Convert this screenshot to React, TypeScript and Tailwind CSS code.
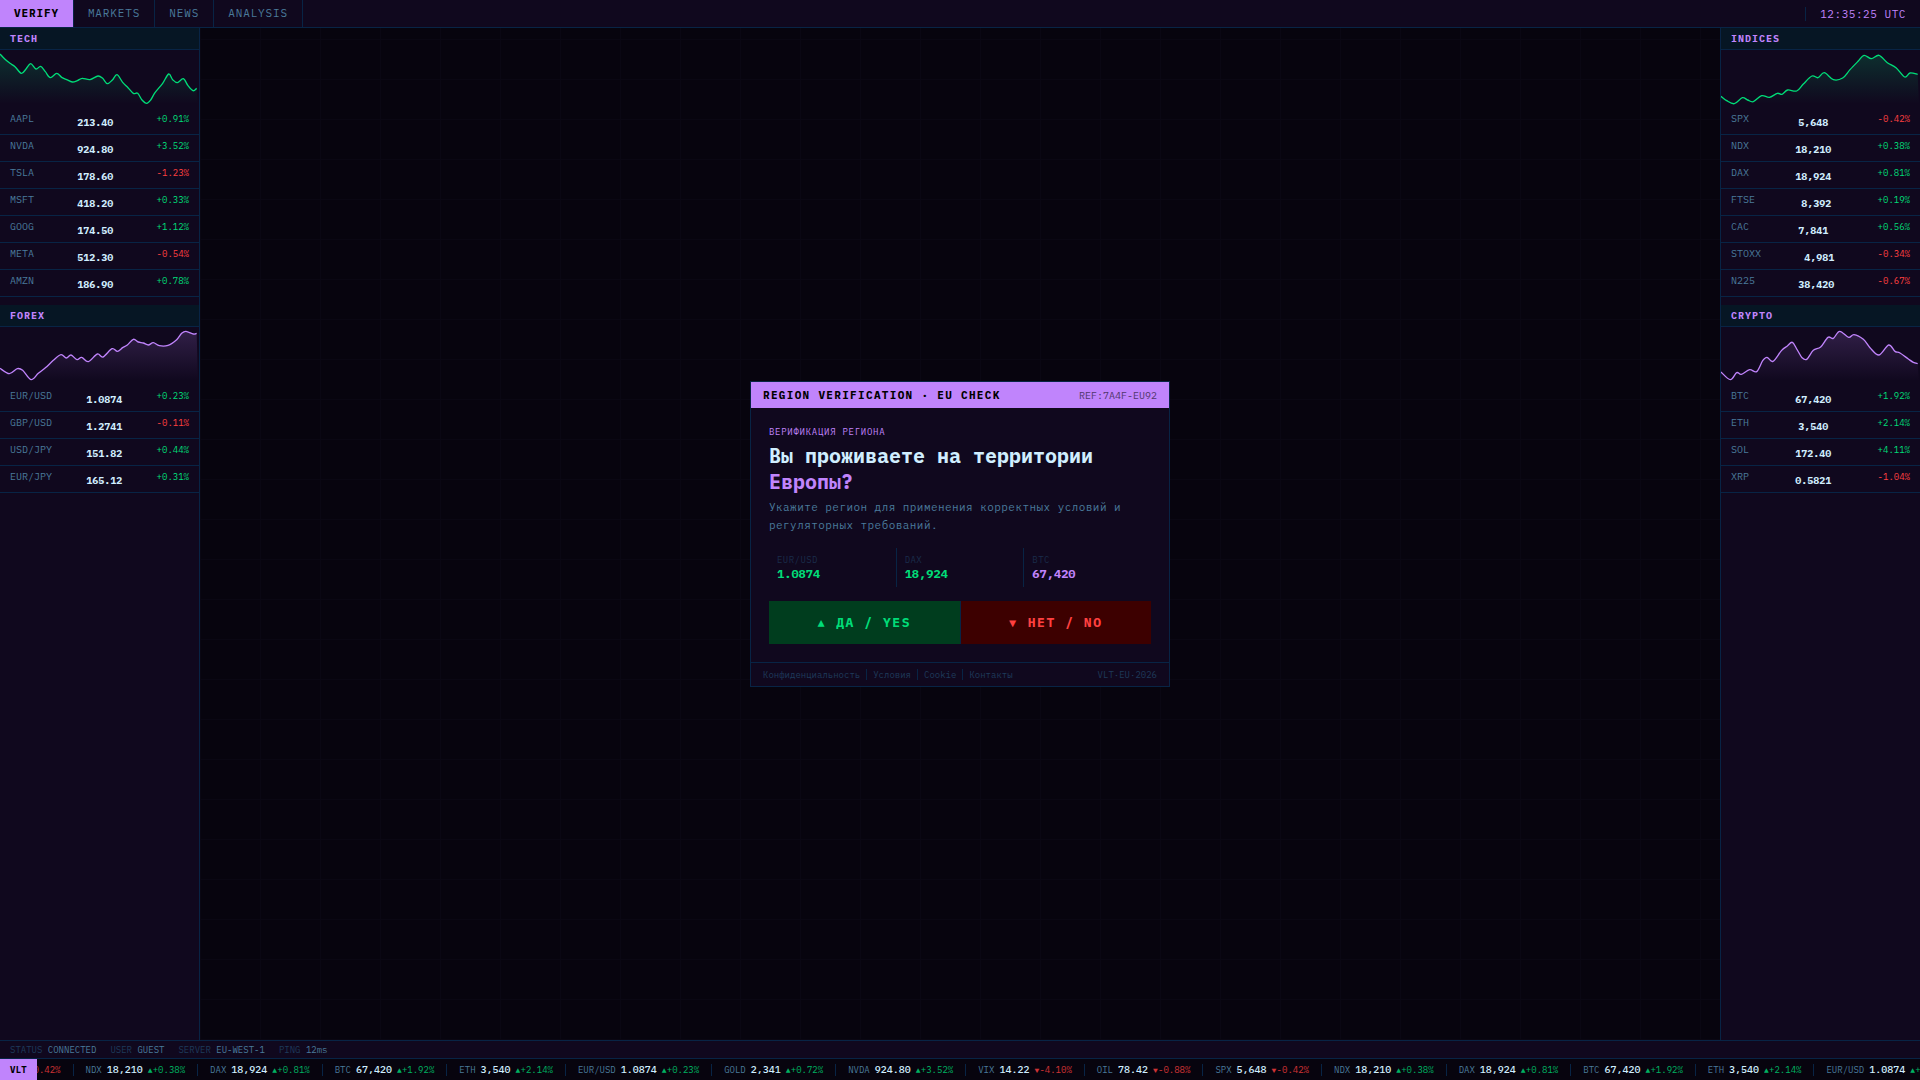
import { useState } from 'react';

interface Quote {
  symbol: string;
  price: string;
  change: string;
}

interface Panel {
  title: string;
  tone: 'green' | 'purple';
  points: number[][];
  quotes: Quote[];
}

const TABS = ['VERIFY', 'MARKETS', 'NEWS', 'ANALYSIS'];

const LEFT_PANELS: Panel[] = [
  {
    title: 'TECH',
    tone: 'green',
    points: [[0, 12], [15, 28], [30, 40], [45, 50], [64, 70], [78, 57], [92, 41], [108, 57], [122, 49], [136, 65], [151, 83], [170, 70], [185, 82], [200, 89], [217, 96], [232, 92], [247, 85], [270, 89], [294, 78], [308, 85], [322, 101], [337, 90], [351, 74], [368, 97], [384, 113], [400, 130], [413, 130], [426, 150], [440, 160], [452, 150], [465, 128], [488, 100], [506, 72], [518, 89], [532, 98], [550, 86], [564, 107], [579, 122], [590, 115]],
    quotes: [
      { symbol: 'AAPL', price: '213.40', change: '+0.91%' },
      { symbol: 'NVDA', price: '924.80', change: '+3.52%' },
      { symbol: 'TSLA', price: '178.60', change: '-1.23%' },
      { symbol: 'MSFT', price: '418.20', change: '+0.33%' },
      { symbol: 'GOOG', price: '174.50', change: '+1.12%' },
      { symbol: 'META', price: '512.30', change: '-0.54%' },
      { symbol: 'AMZN', price: '186.90', change: '+0.78%' },
    ],
  },
  {
    title: 'FOREX',
    tone: 'purple',
    points: [[0, 124], [28, 140], [52, 125], [68, 130], [93, 158], [115, 139], [138, 121], [160, 100], [183, 83], [199, 93], [213, 84], [231, 98], [245, 91], [265, 104], [292, 81], [309, 90], [336, 65], [352, 73], [368, 62], [382, 54], [400, 37], [415, 45], [430, 48], [445, 54], [460, 47], [478, 56], [504, 55], [530, 38], [545, 19], [558, 13], [580, 21], [590, 19]],
    quotes: [
      { symbol: 'EUR/USD', price: '1.0874', change: '+0.23%' },
      { symbol: 'GBP/USD', price: '1.2741', change: '-0.11%' },
      { symbol: 'USD/JPY', price: '151.82', change: '+0.44%' },
      { symbol: 'EUR/JPY', price: '165.12', change: '+0.31%' },
    ],
  },
];

const RIGHT_PANELS: Panel[] = [
  {
    title: 'INDICES',
    tone: 'green',
    points: [[0, 139], [17, 152], [40, 161], [64, 143], [80, 150], [97, 155], [122, 137], [145, 142], [169, 130], [183, 133], [200, 120], [227, 123], [247, 102], [273, 78], [291, 83], [310, 68], [337, 89], [365, 84], [387, 59], [412, 33], [429, 16], [451, 26], [474, 16], [499, 38], [525, 53], [551, 81], [567, 69], [590, 73]],
    quotes: [
      { symbol: 'SPX', price: '5,648', change: '-0.42%' },
      { symbol: 'NDX', price: '18,210', change: '+0.38%' },
      { symbol: 'DAX', price: '18,924', change: '+0.81%' },
      { symbol: 'FTSE', price: '8,392', change: '+0.19%' },
      { symbol: 'CAC', price: '7,841', change: '+0.56%' },
      { symbol: 'STOXX', price: '4,981', change: '-0.34%' },
      { symbol: 'N225', price: '38,420', change: '-0.67%' },
    ],
  },
  {
    title: 'CRYPTO',
    tone: 'purple',
    points: [[0, 135], [28, 158], [47, 137], [61, 142], [86, 128], [107, 134], [125, 101], [138, 91], [156, 103], [182, 70], [199, 57], [214, 46], [229, 69], [243, 92], [257, 97], [277, 70], [299, 60], [321, 31], [337, 34], [356, 13], [383, 31], [399, 23], [427, 37], [447, 62], [474, 84], [503, 54], [522, 73], [537, 78], [562, 96], [577, 106], [590, 110]],
    quotes: [
      { symbol: 'BTC', price: '67,420', change: '+1.92%' },
      { symbol: 'ETH', price: '3,540', change: '+2.14%' },
      { symbol: 'SOL', price: '172.40', change: '+4.11%' },
      { symbol: 'XRP', price: '0.5821', change: '-1.04%' },
    ],
  },
];

const TICKER: Quote[] = [
  { symbol: 'SPX', price: '5,648', change: '-0.42%' },
  { symbol: 'NDX', price: '18,210', change: '+0.38%' },
  { symbol: 'DAX', price: '18,924', change: '+0.81%' },
  { symbol: 'BTC', price: '67,420', change: '+1.92%' },
  { symbol: 'ETH', price: '3,540', change: '+2.14%' },
  { symbol: 'EUR/USD', price: '1.0874', change: '+0.23%' },
  { symbol: 'GOLD', price: '2,341', change: '+0.72%' },
  { symbol: 'NVDA', price: '924.80', change: '+3.52%' },
  { symbol: 'VIX', price: '14.22', change: '-4.10%' },
  { symbol: 'OIL', price: '78.42', change: '-0.88%' },
];

const STATUS = [
  ['STATUS', 'CONNECTED'],
  ['USER', 'GUEST'],
  ['SERVER', 'EU-WEST-1'],
  ['PING', '12ms'],
];

const STATS = [
  { label: 'EUR/USD', value: '1.0874', color: 'text-[#00dc78]' },
  { label: 'DAX', value: '18,924', color: 'text-[#00dc78]' },
  { label: 'BTC', value: '67,420', color: 'text-[#c084fc]' },
];

const LINKS = ['Конфиденциальность', 'Условия', 'Cookie', 'Контакты'];

function changeColor(change: string) {
  return change.startsWith('-') ? 'text-[#ff4040]' : 'text-[#00dc78]';
}

// Catmull-Rom spline through the points
function smoothPath(pts: number[][]) {
  let d = `M${pts[0][0]} ${pts[0][1]}`;
  for (let i = 0; i < pts.length - 1; i++) {
    const p0 = pts[i - 1] ?? pts[i];
    const p1 = pts[i];
    const p2 = pts[i + 1];
    const p3 = pts[i + 2] ?? p2;
    d += ` C${p1[0] + (p2[0] - p0[0]) / 6} ${p1[1] + (p2[1] - p0[1]) / 6} ${p2[0] - (p3[0] - p1[0]) / 6} ${p2[1] - (p3[1] - p1[1]) / 6} ${p2[0]} ${p2[1]}`;
  }
  return d;
}

function Sparkline({ id, points, tone }: { id: string; points: number[][]; tone: Panel['tone'] }) {
  const color = tone === 'green' ? '#00dc78' : '#c084fc';
  const line = smoothPath(points);
  return (
    <svg viewBox="0 0 597 174" preserveAspectRatio="none" className="block w-full h-[58px]" aria-hidden="true">
      <defs>
        <linearGradient id={id} gradientUnits="userSpaceOnUse" x1="0" y1="0" x2="0" y2="162">
          <stop offset="0" stopColor={color} stopOpacity="0.2" />
          <stop offset="1" stopColor={color} stopOpacity="0" />
        </linearGradient>
      </defs>
      <path d={`${line} L594 168 L0 168 Z`} fill={`url(#${id})`} />
      <path d={line} fill="none" stroke={color} strokeWidth="4" />
    </svg>
  );
}

function Sidebar({ panels, className }: { panels: Panel[]; className: string }) {
  return (
    <aside className={`w-[200px] shrink-0 flex flex-col gap-2 bg-[#10081e] border-[#082445] ${className}`}>
      {panels.map(panel => (
        <section key={panel.title}>
          <h2 className="h-[22px] px-2.5 flex items-center bg-[#061624] border-b border-[#082445] text-[10px] font-bold tracking-widest text-[#c084fc]">
            {panel.title}
          </h2>
          <Sparkline id={`fill-${panel.title}`} points={panel.points} tone={panel.tone} />
          <table className="block" aria-label={panel.title}>
            <tbody className="block">
              {panel.quotes.map(q => (
                <tr key={q.symbol} className="h-[27px] px-2.5 py-[5px] flex justify-between border-b border-[#082445] leading-3">
                  <td className="text-[10px] text-[#4a7a9b]">{q.symbol}</td>
                  <td className="self-end text-[10px] font-bold text-[#d0eeff]">{q.price}</td>
                  <td className={`text-[9px] leading-[11px] ${changeColor(q.change)}`}>{q.change}</td>
                </tr>
              ))}
            </tbody>
          </table>
        </section>
      ))}
    </aside>
  );
}

function VerifyCard() {
  return (
    <div className="w-[420px] border border-[#082445] bg-[#10081e]">
      <div className="h-[26px] px-3 flex items-center justify-between bg-[#c084fc] text-black">
        <span className="text-[11px] font-bold tracking-[0.12em]">REGION VERIFICATION · EU CHECK</span>
        <span className="text-[10px] opacity-60">REF:7A4F-EU92</span>
      </div>

      <div className="p-[18px]">
        <p className="mb-[5px] text-[9px] leading-3 tracking-[0.08em] text-[#c084fc]">ВЕРИФИКАЦИЯ РЕГИОНА</p>
        <h1 className="mb-[3px] text-xl leading-[26px] font-bold text-[#d0eeff]">
          Вы проживаете на территории <span className="text-[#c084fc]">Европы?</span>
        </h1>
        <p className="mb-3.5 text-[11px] leading-[18px] tracking-[0.04em] text-[#4a7a9b]">
          Укажите регион для применения корректных условий и регуляторных требований.
        </p>

        <dl className="mb-3.5 grid grid-cols-3 gap-px bg-[#082445]">
          {STATS.map(s => (
            <div key={s.label} className="px-2 py-1.5 bg-[#10081e]">
              <dt className="mb-px text-[9px] leading-[11px] tracking-wider text-[#1a2c4a]">{s.label}</dt>
              <dd className={`text-xs leading-[15px] font-bold ${s.color}`}>{s.value}</dd>
            </div>
          ))}
        </dl>

        <div className="grid grid-cols-2 gap-px bg-[#082445] text-[13px] font-bold tracking-[0.12em]">
          <button className="h-[43px] flex items-center justify-center gap-2.5 bg-[#003d1e] hover:bg-[#004d26] text-[#00dc78]">
            <span className="text-xs">▲</span>ДА / YES
          </button>
          <button className="h-[43px] flex items-center justify-center gap-2.5 bg-[#3d0000] hover:bg-[#4d0000] text-[#ff4040]">
            <span className="text-xs">▼</span>НЕТ / NO
          </button>
        </div>
      </div>

      <div className="h-6 px-3 flex items-center justify-between border-t border-[#082445] text-[9px] leading-[11px] text-[#1e3a5a]">
        <div className="flex">
          {LINKS.map((link, i) => (
            <a
              key={link}
              href="#"
              className={i === 0 ? 'pr-1.5' : 'px-1.5 border-l border-[#082445]'}
            >
              {link}
            </a>
          ))}
        </div>
        <span>VLT·EU·2026</span>
      </div>
    </div>
  );
}

function Ticker() {
  const items = [...TICKER, ...TICKER.slice(0, 6)];
  return (
    <div className="h-[22px] flex border-t border-[#082445] bg-[#07040e]">
      <div className="px-2.5 shrink-0 flex items-center bg-[#c084fc] text-[9px] font-bold tracking-wide text-black">VLT</div>
      <div className="flex-1 min-w-0 flex items-center overflow-hidden">
        <div className="-ml-[82px] flex">
          {items.map((q, i) => (
            <div key={i} className="h-3 px-3 shrink-0 flex items-center gap-[5px] border-r border-[#082445] text-[9px]">
              <span className="text-[#4a7a9b]">{q.symbol}</span>
              <span className="text-[10px] font-medium text-[#d0eeff]">{q.price}</span>
              <span className={`flex items-center opacity-80 ${changeColor(q.change)}`}>
                <span className="w-[5px] text-[8px]">{q.change.startsWith('-') ? '▼' : '▲'}</span>
                {q.change}
              </span>
            </div>
          ))}
        </div>
      </div>
    </div>
  );
}

export default function App() {
  const [tab, setTab] = useState('VERIFY');

  return (
    <div className="min-h-screen flex flex-col bg-[#07040e] font-['IBM_Plex_Mono','Liberation_Mono',monospace]">
      <header className="h-7 flex items-center justify-between border-b border-[#082445] bg-[#10081e] text-[11px]">
        <nav className="h-full flex">
          {TABS.map(t => (
            <button
              key={t}
              onClick={() => setTab(t)}
              className={`px-3.5 border-r border-[#082445] tracking-[0.08em] ${t === tab ? 'bg-[#c084fc] font-bold text-black' : 'text-[#4a7a9b]'}`}
            >
              {t}
            </button>
          ))}
        </nav>
        <time className="px-3.5 border-l border-[#082445] leading-[14px] tracking-wider text-[#c084fc]">12:35:25 UTC</time>
      </header>

      <div className="flex-1 flex">
        <Sidebar panels={LEFT_PANELS} className="border-r" />
        <main className="flex-1 flex items-center justify-center bg-[linear-gradient(#0a0713_1px,transparent_1px),linear-gradient(90deg,#0a0713_1px,transparent_1px)] bg-[size:60px_40px] bg-[position:0_11px]">
          <VerifyCard />
        </main>
        <Sidebar panels={RIGHT_PANELS} className="border-l" />
      </div>

      <div className="h-[18px] px-2.5 flex items-center gap-3.5 border-t border-[#082445] bg-[#10081e] text-[9px] text-[#1e3a5a]">
        {STATUS.map(([label, value]) => (
          <span key={label}>
            {label} <span className="text-[#4a7a9b]">{value}</span>
          </span>
        ))}
      </div>
      <Ticker />
    </div>
  );
}
